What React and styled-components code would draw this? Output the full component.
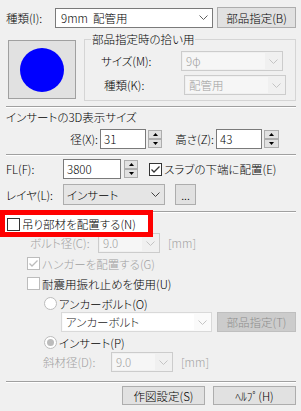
import React from 'react';
import styled, { createGlobalStyle } from 'styled-components';

const GlobalStyle = createGlobalStyle`
  html, body {
    margin: 0;
    padding: 0;
    background: #f0f0f0;
  }
  body {
    font-family: "Noto Sans CJK JP", "Liberation Sans", sans-serif;
    font-size: 11.5px;
    font-weight: 300;
    line-height: 14px;
    font-feature-settings: "palt";
    color: #000;
  }
`;

const DISABLED = '#a0a0a0';

const Dialog = styled.div`
  width: 301px;
  height: 411px;
  box-sizing: border-box;
  padding: 7px 5px 0 6px;
  display: flex;
  flex-direction: column;
  background: #f0f0f0;
  overflow: hidden;
`;

const Row = styled.div`
  display: flex;
  align-items: center;
  flex-shrink: 0;
  height: ${p => p.$h || 20}px;
  margin-top: ${p => p.$mt || 0}px;
  padding-left: ${p => p.$pl || 0}px;
  justify-content: ${p => (p.$end ? 'flex-end' : 'flex-start')};
`;

const Label = styled.span`
  flex-shrink: 0;
  white-space: nowrap;
  width: ${p => (p.$w ? `${p.$w}px` : 'auto')};
  text-align: ${p => (p.$right ? 'right' : 'left')};
  padding-left: ${p => p.$pl || 0}px;
  margin-left: ${p => p.$ml || 0}px;
  color: ${p => (p.$off ? DISABLED : '#000')};
`;

const Title = styled.div`
  margin-top: ${p => p.$mt || 0}px;
  height: 14px;
  white-space: nowrap;
`;

const Separator = styled.div`
  flex-shrink: 0;
  height: 0;
  margin-top: ${p => p.$mt || 0}px;
  border-top: 1px solid #a0a0a0;
  border-bottom: 1px solid #fff;
`;

const comboSkins = {
  edit: { border: '#7a7a7a', bg: '#fff', field: '#fff', text: '#000' },
  list: { border: '#adadad', bg: '#e5e5e5', field: '#e5e5e5', text: '#000' },
  off: { border: '#cccccc', bg: '#f0f0f0', field: '#f6f6f6', text: DISABLED },
  ghost: { border: '#d9d9d9', bg: '#fafafa', field: '#fff', text: '#1a1a1a' },
};

const ComboBox = styled.div`
  flex-shrink: 0;
  box-sizing: border-box;
  width: ${p => p.$w}px;
  height: ${p => p.$h || 20}px;
  margin-left: ${p => p.$ml || 0}px;
  display: flex;
  align-items: stretch;
  border: 1px solid ${p => comboSkins[p.$skin].border};
  background: ${p => comboSkins[p.$skin].bg};
`;

const ComboField = styled.div`
  flex: 1;
  margin: ${p => (p.$inset ? '1px 0 1px 1px' : '0')};
  display: flex;
  align-items: center;
  padding-left: ${p => p.$pad || 3}px;
  white-space: nowrap;
  overflow: hidden;
  background: ${p => comboSkins[p.$skin].field};
  color: ${p => comboSkins[p.$skin].text};
`;

const ChevronBox = styled.div`
  width: 17px;
  flex-shrink: 0;
  display: flex;
  align-items: center;
  justify-content: center;
`;

const Chevron = ({ color = '#606060' }) => (
  <svg width="9" height="5" viewBox="0 0 9 5">
    <polyline points="0.5,0.5 4.5,4.5 8.5,0.5" fill="none" stroke={color} strokeWidth="1" />
  </svg>
);

const Combo = ({ w, h, ml, skin = 'edit', inset, pad, chev, children }) => (
  <ComboBox $w={w} $h={h} $ml={ml} $skin={skin}>
    <ComboField $skin={skin} $inset={inset} $pad={pad}>{children}</ComboField>
    <ChevronBox>
      <Chevron color={chev} />
    </ChevronBox>
  </ComboBox>
);

const Edit = styled.div`
  flex-shrink: 0;
  box-sizing: border-box;
  width: ${p => p.$w}px;
  height: 20px;
  margin-left: ${p => p.$ml || 0}px;
  padding-left: 3px;
  display: flex;
  align-items: center;
  border: 1px solid #7a7a7a;
  background: #fff;
`;

const Spin = styled.div`
  flex-shrink: 0;
  width: ${p => p.$w || 14}px;
  height: 18px;
  margin-left: ${p => p.$ml || 2}px;
  display: flex;
  flex-direction: column;
`;

const SpinButton = styled.div`
  flex: 1;
  box-sizing: border-box;
  border: 1px solid #adadad;
  background: #e1e1e1;
  display: flex;
  align-items: center;
  justify-content: center;
`;

const Arrow = ({ down }) => (
  <svg width="5" height="3" viewBox="0 0 5 3">
    <polygon points={down ? '0,0 5,0 2.5,3' : '0,3 5,3 2.5,0'} fill="#000" />
  </svg>
);

const Spinner = ({ w, ml }) => (
  <Spin $w={w} $ml={ml}>
    <SpinButton><Arrow /></SpinButton>
    <SpinButton><Arrow down /></SpinButton>
  </Spin>
);

const Button = styled.div`
  flex-shrink: 0;
  box-sizing: border-box;
  width: ${p => p.$w}px;
  height: ${p => p.$h || 21}px;
  margin-left: ${p => p.$ml || 0}px;
  display: flex;
  align-items: center;
  justify-content: center;
  white-space: nowrap;
  border: 1px solid ${p => (p.$off ? '#bfbfbf' : '#adadad')};
  background: ${p => (p.$off ? '#cccccc' : '#e1e1e1')};
  color: ${p => (p.$off ? '#8c8c8c' : '#000')};
`;

const Box = styled.span`
  flex-shrink: 0;
  box-sizing: border-box;
  width: 13px;
  height: 13px;
  margin-left: ${p => p.$ml || 0}px;
  margin-right: 2px;
  display: flex;
  align-items: center;
  justify-content: center;
  border: 1px solid ${p => (p.$off ? '#bcbcbc' : '#333')};
  background: #fff;
`;

const CheckBox = ({ checked, off, ml }) => (
  <Box $off={off} $ml={ml}>
    {checked && (
      <svg width="11" height="11" viewBox="0 0 11 11">
        <polyline
          points="1.5,5.5 4,8 9.5,2.5"
          fill="none"
          stroke={off ? '#bcbcbc' : '#333'}
          strokeWidth="1.3"
        />
      </svg>
    )}
  </Box>
);

const Round = styled(Box)`
  border-radius: 50%;
  border-color: #bcbcbc;
`;

const Dot = styled.span`
  width: 7px;
  height: 7px;
  border-radius: 50%;
  background: #bcbcbc;
`;

const Radio = ({ checked, ml }) => (
  <Round $ml={ml}>{checked && <Dot />}</Round>
);

const TopPanel = styled.div`
  display: flex;
  align-items: flex-start;
  flex-shrink: 0;
  margin-top: 4px;
`;

const Preview = styled.div`
  flex-shrink: 0;
  box-sizing: border-box;
  width: 68px;
  height: 59px;
  margin: 8px 0 0 2px;
  display: flex;
  align-items: center;
  justify-content: center;
  border: 1px solid #a0a0a0;
  background: #e1e1e1;
`;

const Disc = styled.div`
  width: 44px;
  height: 44px;
  border-radius: 50%;
  background: #0000ff;
`;

const Group = styled.fieldset`
  box-sizing: border-box;
  width: 213px;
  margin: 0 0 0 8px;
  padding: 5px 0 5px 0;
  min-width: 0;
  border: 1px solid #d5d5d5;
  display: flex;
  flex-direction: column;
  gap: 4px;
`;

const Legend = styled.legend`
  margin-left: 6px;
  padding: 0 1px;
  line-height: 14px;
  white-space: nowrap;
`;

const Highlight = styled(Row)`
  position: relative;
  z-index: 0;

  &::before {
    content: '';
    position: absolute;
    left: -6px;
    top: -5px;
    width: 153px;
    height: 27px;
    box-sizing: border-box;
    border: 5px solid #ff0000;
    background: #fff;
    z-index: -1;
  }
`;

export default function App() {
  return (
    <>
      <GlobalStyle />
      <Dialog>
        <Row $h={21}>
          <Label $w={49}>種類(I):</Label>
          <Combo w={158} pad={5}>9mm&nbsp;&nbsp;配管用</Combo>
          <Button $w={79} $ml={4}>部品指定(B)</Button>
        </Row>

        <TopPanel>
          <Preview>
            <Disc />
          </Preview>
          <Group>
            <Legend>部品指定時の拾い用</Legend>
            <Row>
              <Label $w={80} $pl={16}>サイズ(M):</Label>
              <Combo w={102} skin="off" inset chev="#c4c4c4">9φ</Combo>
            </Row>
            <Row>
              <Label $w={80} $pl={19}>種類(K):</Label>
              <Combo w={102} skin="off" inset chev="#c4c4c4">配管用</Combo>
            </Row>
          </Group>
        </TopPanel>

        <Separator $mt={5} />
        <Title $mt={2}>インサートの3D表示サイズ</Title>

        <Row $mt={5}>
          <Label $w={92} $right>径(X):</Label>
          <Edit $w={46} $ml={2}>31</Edit>
          <Spinner />
          <Label $w={52} $right>高さ(Z):</Label>
          <Edit $w={46} $ml={2}>43</Edit>
          <Spinner w={15} />
        </Row>

        <Separator $mt={5} />

        <Row $mt={3}>
          <Label $w={57}>FL(F):</Label>
          <Edit $w={58}>3800</Edit>
          <Spinner ml={3} />
          <CheckBox checked ml={11} />
          <Label>スラブの下端に配置(E)</Label>
        </Row>

        <Row $mt={5} $h={21}>
          <Label $w={57}>レイヤ(L):</Label>
          <Combo w={102} h={21} skin="list" chev="#404040">インサート</Combo>
          <Button $w={21} $ml={10}>...</Button>
        </Row>

        <Separator $mt={6} />

        <Highlight $mt={2} $h={18}>
          <CheckBox ml={1} />
          <Label>吊り部材を配置する(N)</Label>
        </Highlight>

        <Row>
          <Label $w={68} $ml={24} $off>ボルト径(C):</Label>
          <Combo w={62} skin="off" inset chev="#c4c4c4">9.0</Combo>
          <Label $ml={8} $off>[mm]</Label>
        </Row>

        <Row $mt={2} $h={17}>
          <CheckBox checked off ml={21} />
          <Label $off>ハンガーを配置する(G)</Label>
        </Row>

        <Row $mt={3} $h={17}>
          <CheckBox off ml={21} />
          <Label>耐震用振れ止めを使用(U)</Label>
        </Row>

        <Row $mt={3} $h={17}>
          <Radio ml={38} />
          <Label>アンカーボルト(O)</Label>
        </Row>

        <Row>
          <Combo w={151} ml={55} skin="ghost" inset chev="#c4c4c4">アンカーボルト</Combo>
          <Button $w={79} $h={20} $ml={5} $off>部品指定(T)</Button>
        </Row>

        <Row $mt={2} $h={17}>
          <Radio checked ml={38} />
          <Label>インサート(P)</Label>
        </Row>

        <Row $mt={1}>
          <Label $w={68} $ml={37} $off>斜材径(D):</Label>
          <Combo w={62} skin="off" inset chev="#c4c4c4">9.0</Combo>
          <Label $ml={8} $off>[mm]</Label>
        </Row>

        <Separator $mt={9} />

        <Row $mt={3} $h={19} $end>
          <Button $w={83} $h={19}>作図設定(S)</Button>
          <Button $w={83} $h={19} $ml={8}>ﾍﾙﾌﾟ(H)</Button>
        </Row>
      </Dialog>
    </>
  );
}
